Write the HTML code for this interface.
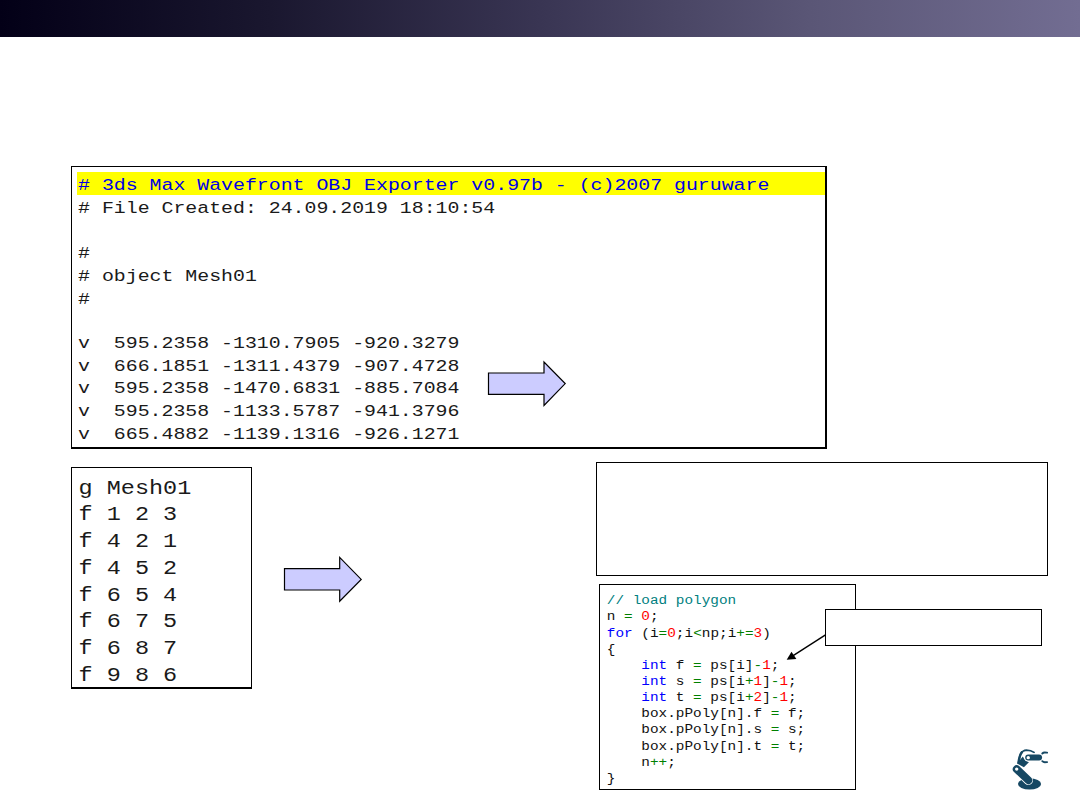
<!DOCTYPE html>
<html lang="en">
<head>
<meta charset="utf-8">
<title>OBJ loader slide</title>
<style>
  html, body { margin: 0; padding: 0; background: #ffffff; }
  body { width: 1080px; height: 810px; position: relative; overflow: hidden;
         font-family: "Liberation Mono", "DejaVu Sans Mono", monospace; color: #000; }
  .abs { position: absolute; box-sizing: border-box; }
  #hdr { left: 0; top: 0; width: 1080px; height: 37px;
         background: linear-gradient(to right, #030017 0%, #1a172f 25%, #393553 50%, #5a5676 75%, #726d92 100%); }
  .box { border: 1px solid #000; background: #fff; }
  pre { margin: 0; font-family: inherit; }

  /* top OBJ listing */
  #obj { left: 71px; top: 166px; width: 756px; height: 283px; border-right-width: 2px; border-bottom-width: 2px; }
  #obj .hl { position: absolute; left: 5px; top: 5px; right: 0; height: 23px; background: #ffff00; }
  #obj pre { position: absolute; left: 6.1px; top: 8.0px; font-size: 19.88px; line-height: 26.917px; color: #1a1a1a; transform: scaleY(0.84); transform-origin: 0 0; }
  #obj pre .b { color: #0000e6; }

  /* faces listing */
  #faces { left: 71px; top: 467px; width: 181px; height: 222px; border-bottom-width: 2px; }
  #faces pre { position: absolute; left: 6.5px; top: 6.7px; font-size: 23.5px; line-height: 31.47px; color: #1a1a1a; transform: scaleY(0.85); transform-origin: 0 0; }

  /* empty text boxes */
  #note { left: 596px; top: 462px; width: 452px; height: 114px; }
  #label { left: 825px; top: 609px; width: 217px; height: 37px; }

  /* code */
  #code { left: 599px; top: 584px; width: 257px; height: 206px; }
  #code pre { position: absolute; left: 6.8px; top: 8.2px; font-size: 14.38px; line-height: 19.29px; color: #111; transform: scaleY(0.84); transform-origin: 0 0; }
  .c { color: #008080; } .k { color: #0000ff; } .n { color: #ff0000; } .o { color: #008000; }

  svg { position: absolute; left: 0; top: 0; overflow: visible; }
</style>
</head>
<body>
<div id="hdr" class="abs"></div>

<div id="obj" class="abs box">
  <div class="hl"></div>
<pre><span class="b"># 3ds Max Wavefront OBJ Exporter v0.97b - (c)2007 guruware</span>
# File Created: 24.09.2019 18:10:54

#
# object Mesh01
#

v  595.2358 -1310.7905 -920.3279
v  666.1851 -1311.4379 -907.4728
v  595.2358 -1470.6831 -885.7084
v  595.2358 -1133.5787 -941.3796
v  665.4882 -1139.1316 -926.1271</pre>
</div>

<div id="faces" class="abs box">
<pre>g Mesh01
f 1 2 3
f 4 2 1
f 4 5 2
f 6 5 4
f 6 7 5
f 6 8 7
f 9 8 6</pre>
</div>

<div id="note" class="abs box"></div>

<div id="code" class="abs box">
<pre><span class="c">// load polygon</span>
n <span class="o">=</span> <span class="n">0</span>;
<span class="k">for</span> (i<span class="o">=</span><span class="n">0</span>;i<span class="o">&lt;</span>np;i<span class="o">+=</span><span class="n">3</span>)
{
    <span class="k">int</span> f <span class="o">=</span> ps[i]<span class="o">-</span><span class="n">1</span>;
    <span class="k">int</span> s <span class="o">=</span> ps[i<span class="o">+</span><span class="n">1</span>]<span class="o">-</span><span class="n">1</span>;
    <span class="k">int</span> t <span class="o">=</span> ps[i<span class="o">+</span><span class="n">2</span>]<span class="o">-</span><span class="n">1</span>;
    box.pPoly[n].f <span class="o">=</span> f;
    box.pPoly[n].s <span class="o">=</span> s;
    box.pPoly[n].t <span class="o">=</span> t;
    n<span class="o">++</span>;
}</pre>
</div>

<div id="label" class="abs box"></div>

<svg width="1080" height="810" viewBox="0 0 1080 810">
  <!-- block arrows -->
  <polygon points="488.5,373 544,373 544,362 565.2,383.6 544,405.4 544,394.4 488.5,394.4" fill="#ccccff" stroke="#000" stroke-width="1.2" stroke-linejoin="miter"/>
  <polygon points="284.5,568.6 339.7,568.6 339.7,557.4 361.2,579.4 339.7,601.2 339.7,590 284.5,590" fill="#ccccff" stroke="#000" stroke-width="1.2" stroke-linejoin="miter"/>
  <!-- connector arrow -->
  <line x1="825.5" y1="634.8" x2="792" y2="656.3" stroke="#000" stroke-width="1.4"/>
  <polygon points="786.7,659.8 791.5,651.7 796.4,658.9" fill="#000"/>
  <!-- robot arm logo (coordinates in 12.46x zoom space) -->
  <g transform="translate(1000,735) scale(0.08025)" fill="#164863" stroke="none">
    <!-- base -->
    <ellipse cx="368" cy="610" rx="144" ry="70"/>
    <!-- lower arm with white outline -->
    <line x1="208" y1="425" x2="354" y2="564" stroke="#fff" stroke-width="116" stroke-linecap="round"/>
    <line x1="208" y1="425" x2="354" y2="564" stroke="#164863" stroke-width="97" stroke-linecap="round"/>
    <circle cx="208" cy="425" r="21" fill="#fff"/>
    <!-- elbow block -->
    <polygon points="213,354 269,287 285,268 298,292 314,314 360,341 298,401"/>
    <!-- cable arc -->
    <path d="M232,345 C245,250 262,192 330,188 C372,188 402,200 424,217" fill="none" stroke="#164863" stroke-width="22" stroke-linecap="round"/>
    <path d="M230,345 C238,290 248,245 272,215" fill="none" stroke="#164863" stroke-width="30" stroke-linecap="round"/>
    <!-- upper arm with white outline -->
    <line x1="352" y1="281" x2="486" y2="281" stroke="#fff" stroke-width="100" stroke-linecap="round"/>
    <line x1="352" y1="281" x2="486" y2="281" stroke="#164863" stroke-width="76" stroke-linecap="round"/>
    <circle cx="352" cy="282" r="21" fill="#fff"/>
    <!-- gripper -->
    <path d="M527,231 Q540,218 558,219 L587,220" fill="none" stroke="#164863" stroke-width="24" stroke-linecap="round"/>
    <path d="M527,326 Q540,338 558,338.5 L587,338" fill="none" stroke="#164863" stroke-width="24" stroke-linecap="round"/>
  </g>
</svg>
</body>
</html>
